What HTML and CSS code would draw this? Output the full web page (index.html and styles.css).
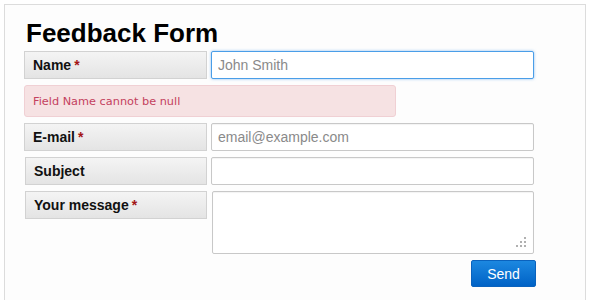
FILE: index.html
```html
<!DOCTYPE html>
<html lang="en">
<head>
<meta charset="UTF-8">
<title>Feedback Form</title>
<link rel="stylesheet" href="styles.css">
</head>
<body>
<div id="panel">
  <h1>Feedback Form</h1>
  <form class="form">
    <div class="row">
      <label class="label" for="name">Name <span class="req">*</span></label>
      <input type="text" id="name" class="field focused" placeholder="John Smith">
    </div>
    <div class="error">Field Name cannot be null</div>
    <div class="row">
      <label class="label" for="email">E-mail <span class="req">*</span></label>
      <input type="text" id="email" class="field" placeholder="email@example.com">
    </div>
    <div class="row">
      <label class="label sub" for="subject">Subject</label>
      <input type="text" id="subject" class="field">
    </div>
    <div class="row top">
      <label class="label sub" for="message">Your message <span class="req">*</span></label>
      <div class="area-wrap">
        <textarea id="message" class="field area"></textarea>
        <svg class="grip" width="12" height="12" viewBox="0 0 12 12">
          <rect x="8" y="1" width="2" height="2" fill="#b0b0b0"/>
          <rect x="8" y="5" width="2" height="2" fill="#b0b0b0"/>
          <rect x="4" y="5" width="2" height="2" fill="#b0b0b0"/>
          <rect x="8" y="9" width="2" height="2" fill="#b0b0b0"/>
          <rect x="4" y="9" width="2" height="2" fill="#b0b0b0"/>
          <rect x="0" y="9" width="2" height="2" fill="#b0b0b0"/>
        </svg>
      </div>
    </div>
    <div class="actions">
      <button type="button" class="send">Send</button>
    </div>
  </form>
</div>
</body>
</html>
```

FILE: styles.css
```css
body {
  margin: 0;
  padding: 0;
  background-color: #fff;
  font-family: "Liberation Sans", Arial, sans-serif;
  color: #111;
}
#panel {
  margin: 4px 0 0 4px;
  width: 582px;
  height: 320px;
  border: 1px solid #dcdcdc;
  background-color: #fdfdfd;
  box-sizing: border-box;
  padding: 15px 0 0 19px;
}
h1 {
  margin: 0 0 0 2px;
  font-size: 26px;
  line-height: 27px;
  font-weight: bold;
  color: #000;
}
.form {
  display: flex;
  flex-direction: column;
  gap: 6px;
  width: 511px;
  margin-top: 4px;
}
.row {
  display: grid;
  grid-template-columns: 183px 323px;
  column-gap: 4px;
  align-items: stretch;
}
.row.top {
  align-items: start;
}
.label {
  display: flex;
  align-items: center;
  height: 28px;
  box-sizing: border-box;
  padding-left: 8px;
  border: 1px solid #d2d2d2;
  background: linear-gradient(#f4f4f4, #e4e4e4);
  font-size: 14px;
  font-weight: bold;
  color: #111;
}
.label.sub {
  padding-left: 8px;
  margin-left: 1px;
}
.req {
  color: #a31515;
  margin-left: 3px;
}
.field {
  height: 28px;
  box-sizing: border-box;
  border: 1px solid #c8c8c8;
  border-radius: 2px;
  padding: 0 6px;
  font-family: "Liberation Sans", Arial, sans-serif;
  font-size: 14px;
  color: #333;
  background-color: #fff;
  box-shadow: inset 0 1px 1px rgba(0, 0, 0, 0.05);
  outline: none;
}
.field::placeholder {
  color: #8a8a8a;
}
.field.focused {
  border-color: #4a9ee8;
  box-shadow: 0 0 3px rgba(70, 150, 230, 0.6);
}
.error {
  display: flex;
  align-items: center;
  width: 372px;
  height: 32px;
  box-sizing: border-box;
  padding: 1px 0 0 8px;
  border: 1px solid #f0d0d4;
  border-radius: 3px;
  background-color: #f6e2e3;
  font-family: "DejaVu Sans", Verdana, sans-serif;
  font-size: 11.3px;
  color: #c4415e;
}
.area-wrap {
  position: relative;
  margin-left: 1px;
}
.area {
  display: block;
  width: 322px;
  height: 63px;
  resize: none;
  padding: 6px;
}
.grip {
  position: absolute;
  right: 6px;
  bottom: 6px;
}
.actions {
  display: flex;
  justify-content: flex-end;
  margin-right: -1px;
}
.send {
  width: 65px;
  height: 27px;
  border: 1px solid #0a62bd;
  border-radius: 2px;
  background: linear-gradient(#1c88e0, #0062c6);
  color: #fff;
  font-family: "Liberation Sans", Arial, sans-serif;
  font-size: 14px;
  cursor: pointer;
}
```
